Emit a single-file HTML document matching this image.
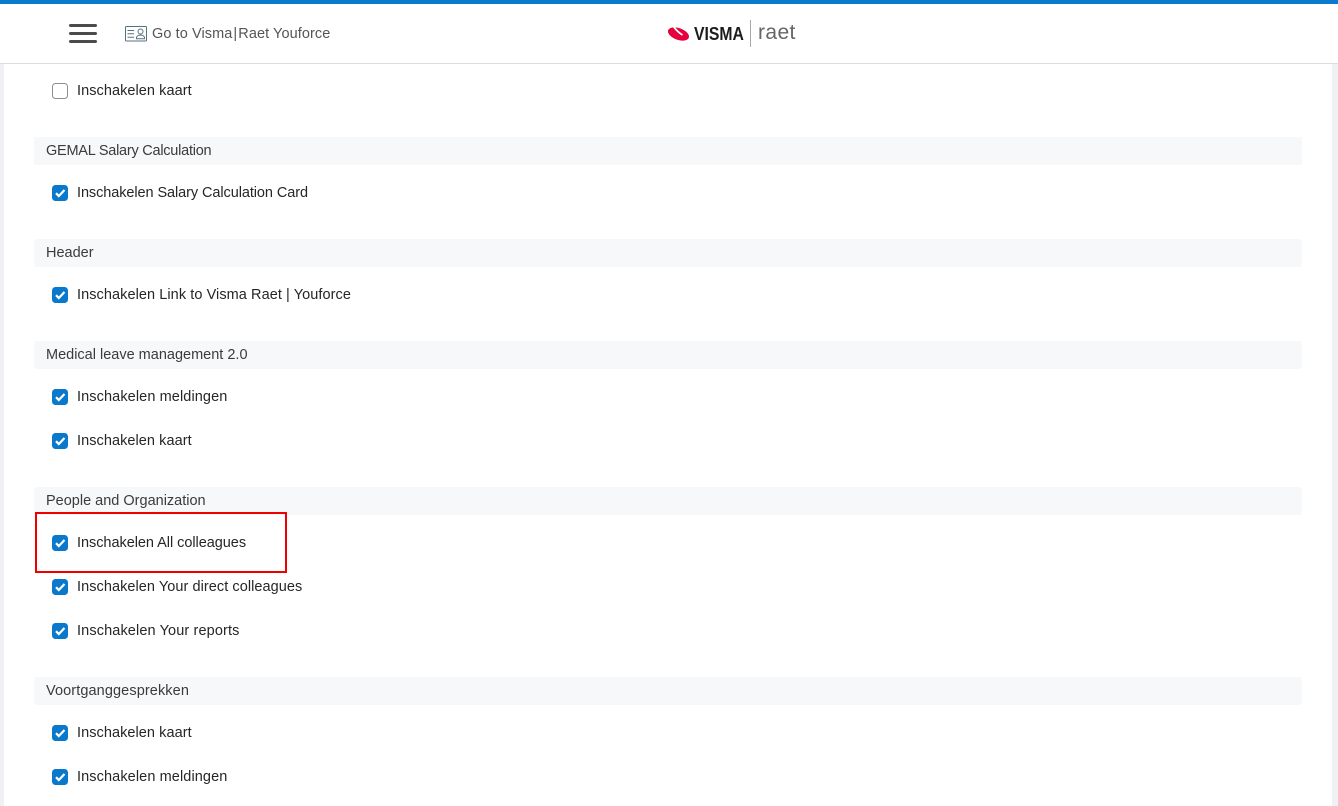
<!DOCTYPE html>
<html><head><meta charset="utf-8"><style>
html,body{margin:0;padding:0}
body{width:1338px;height:806px;overflow:hidden;background:#fff;position:relative;font-family:"Liberation Sans",sans-serif;font-size:14.5px;color:#252626}
.a{position:absolute}
.bar{position:absolute;left:34px;width:1268px;height:28px;background:#f7f8fa;border-radius:2px}
.t{position:absolute;white-space:nowrap;line-height:20px;letter-spacing:0}
.cb{position:absolute;left:52px;width:16px;height:16px;background:#0a79cc;border-radius:3.5px}
.cb svg{position:absolute;left:0;top:0}
</style></head><body>
<div class="a" style="left:0;top:0;width:1338px;height:4px;background:#0a7acc"></div>
<div class="a" style="left:0;top:63px;width:1338px;height:1px;background:#dcdcdc"></div>
<div class="a" style="left:0;top:64px;width:4px;height:742px;background:#eff1f5"></div>
<div class="a" style="left:1332px;top:64px;width:6px;height:742px;background:#eff1f5"></div>

<div class="a" style="left:69px;top:23.500px;width:28px;height:3.200px;background:#4b4b4b;border-radius:1.500px"></div>
<div class="a" style="left:69px;top:31.500px;width:28px;height:3.200px;background:#4b4b4b;border-radius:1.500px"></div>
<div class="a" style="left:69px;top:39.500px;width:28px;height:3.200px;background:#4b4b4b;border-radius:1.500px"></div>
<svg class="a" style="left:125px;top:26px" width="22" height="16" viewBox="0 0 22 16" fill="none" stroke="#55727f" stroke-width="1"><rect x=".5" y=".5" width="21" height="14.500" rx="1"/><path d="M2.500 4.500h6.500M2.500 7.800h6.500M2.500 11.200h6.500"/><circle cx="15.500" cy="5.500" r="2.500"/><path d="M11.500 12.800v-1q0-2.300 4-2.800q4 .5 4 2.800v1z"/></svg>
<div class="t" style="left:152px;top:24px;color:#555;letter-spacing:.08px">Go to Visma<span style="margin:0 1px">|</span>Raet Youforce</div>

<svg class="a" style="left:668px;top:27px" width="22" height="15" viewBox="0 0 22 15"><ellipse cx="10.500" cy="7" rx="11" ry="5.800" transform="rotate(20 10.500 7)" fill="#e6003c"/><path d="M5.500 -.5Q9.500 5 14.500 8" fill="none" stroke="#fff" stroke-width="1.800"/></svg>
<div class="t" style="left:694px;top:24px;font-weight:bold;font-size:18px;letter-spacing:0;color:#1c1c1c;transform:scaleX(.875);transform-origin:0 50%">VISMA</div>
<div class="a" style="left:750px;top:20px;width:1px;height:27px;background:#a8a8a8"></div>
<div class="t" style="left:758px;top:23px;font-size:21px;letter-spacing:.4px;color:#666">raet</div>

<div class="cb" style="top:83px;background:#fff;border:1px solid #8f8f8f;width:14px;height:14px"></div>
<div class="t" style="left:77px;top:81px;letter-spacing:.06px">Inschakelen kaart</div>

<div class="bar" style="top:137px"></div>
<div class="t" style="left:46px;top:141px;color:#3a3b3b;letter-spacing:-.24px">GEMAL Salary Calculation</div>
<div class="cb" style="top:185px"><svg width="16" height="16" viewBox="0 0 16 16"><path d="M4 8.200L6.800 11L12.500 5" fill="none" stroke="#fff" stroke-width="2.200"/></svg></div>
<div class="t" style="left:77px;top:183px;letter-spacing:-.08px">Inschakelen Salary Calculation Card</div>

<div class="bar" style="top:239px"></div>
<div class="t" style="left:46px;top:243px;color:#3a3b3b">Header</div>
<div class="cb" style="top:287px"><svg width="16" height="16" viewBox="0 0 16 16"><path d="M4 8.200L6.800 11L12.500 5" fill="none" stroke="#fff" stroke-width="2.200"/></svg></div>
<div class="t" style="left:77px;top:285px;letter-spacing:.07px">Inschakelen Link to Visma Raet | Youforce</div>

<div class="bar" style="top:341px"></div>
<div class="t" style="left:46px;top:345px;color:#3a3b3b">Medical leave management 2.0</div>
<div class="cb" style="top:389px"><svg width="16" height="16" viewBox="0 0 16 16"><path d="M4 8.200L6.800 11L12.500 5" fill="none" stroke="#fff" stroke-width="2.200"/></svg></div>
<div class="t" style="left:77px;top:387px;letter-spacing:.1px">Inschakelen meldingen</div>
<div class="cb" style="top:433px"><svg width="16" height="16" viewBox="0 0 16 16"><path d="M4 8.200L6.800 11L12.500 5" fill="none" stroke="#fff" stroke-width="2.200"/></svg></div>
<div class="t" style="left:77px;top:431px;letter-spacing:.06px">Inschakelen kaart</div>

<div class="bar" style="top:487px"></div>
<div class="t" style="left:46px;top:491px;color:#3a3b3b">People and Organization</div>
<div class="a" style="left:35px;top:512px;width:248px;height:57px;border:2px solid #ee0000"></div>
<div class="cb" style="top:535px"><svg width="16" height="16" viewBox="0 0 16 16"><path d="M4 8.200L6.800 11L12.500 5" fill="none" stroke="#fff" stroke-width="2.200"/></svg></div>
<div class="t" style="left:77px;top:533px;letter-spacing:-.04px">Inschakelen All colleagues</div>
<div class="cb" style="top:579px"><svg width="16" height="16" viewBox="0 0 16 16"><path d="M4 8.200L6.800 11L12.500 5" fill="none" stroke="#fff" stroke-width="2.200"/></svg></div>
<div class="t" style="left:77px;top:577px;letter-spacing:.06px">Inschakelen Your direct colleagues</div>
<div class="cb" style="top:623px"><svg width="16" height="16" viewBox="0 0 16 16"><path d="M4 8.200L6.800 11L12.500 5" fill="none" stroke="#fff" stroke-width="2.200"/></svg></div>
<div class="t" style="left:77px;top:621px;letter-spacing:.12px">Inschakelen Your reports</div>

<div class="bar" style="top:677px"></div>
<div class="t" style="left:46px;top:681px;color:#3a3b3b;letter-spacing:.1px">Voortganggesprekken</div>
<div class="cb" style="top:725px"><svg width="16" height="16" viewBox="0 0 16 16"><path d="M4 8.200L6.800 11L12.500 5" fill="none" stroke="#fff" stroke-width="2.200"/></svg></div>
<div class="t" style="left:77px;top:723px;letter-spacing:.06px">Inschakelen kaart</div>
<div class="cb" style="top:769px"><svg width="16" height="16" viewBox="0 0 16 16"><path d="M4 8.200L6.800 11L12.500 5" fill="none" stroke="#fff" stroke-width="2.200"/></svg></div>
<div class="t" style="left:77px;top:767px;letter-spacing:.1px">Inschakelen meldingen</div>
</body></html>
